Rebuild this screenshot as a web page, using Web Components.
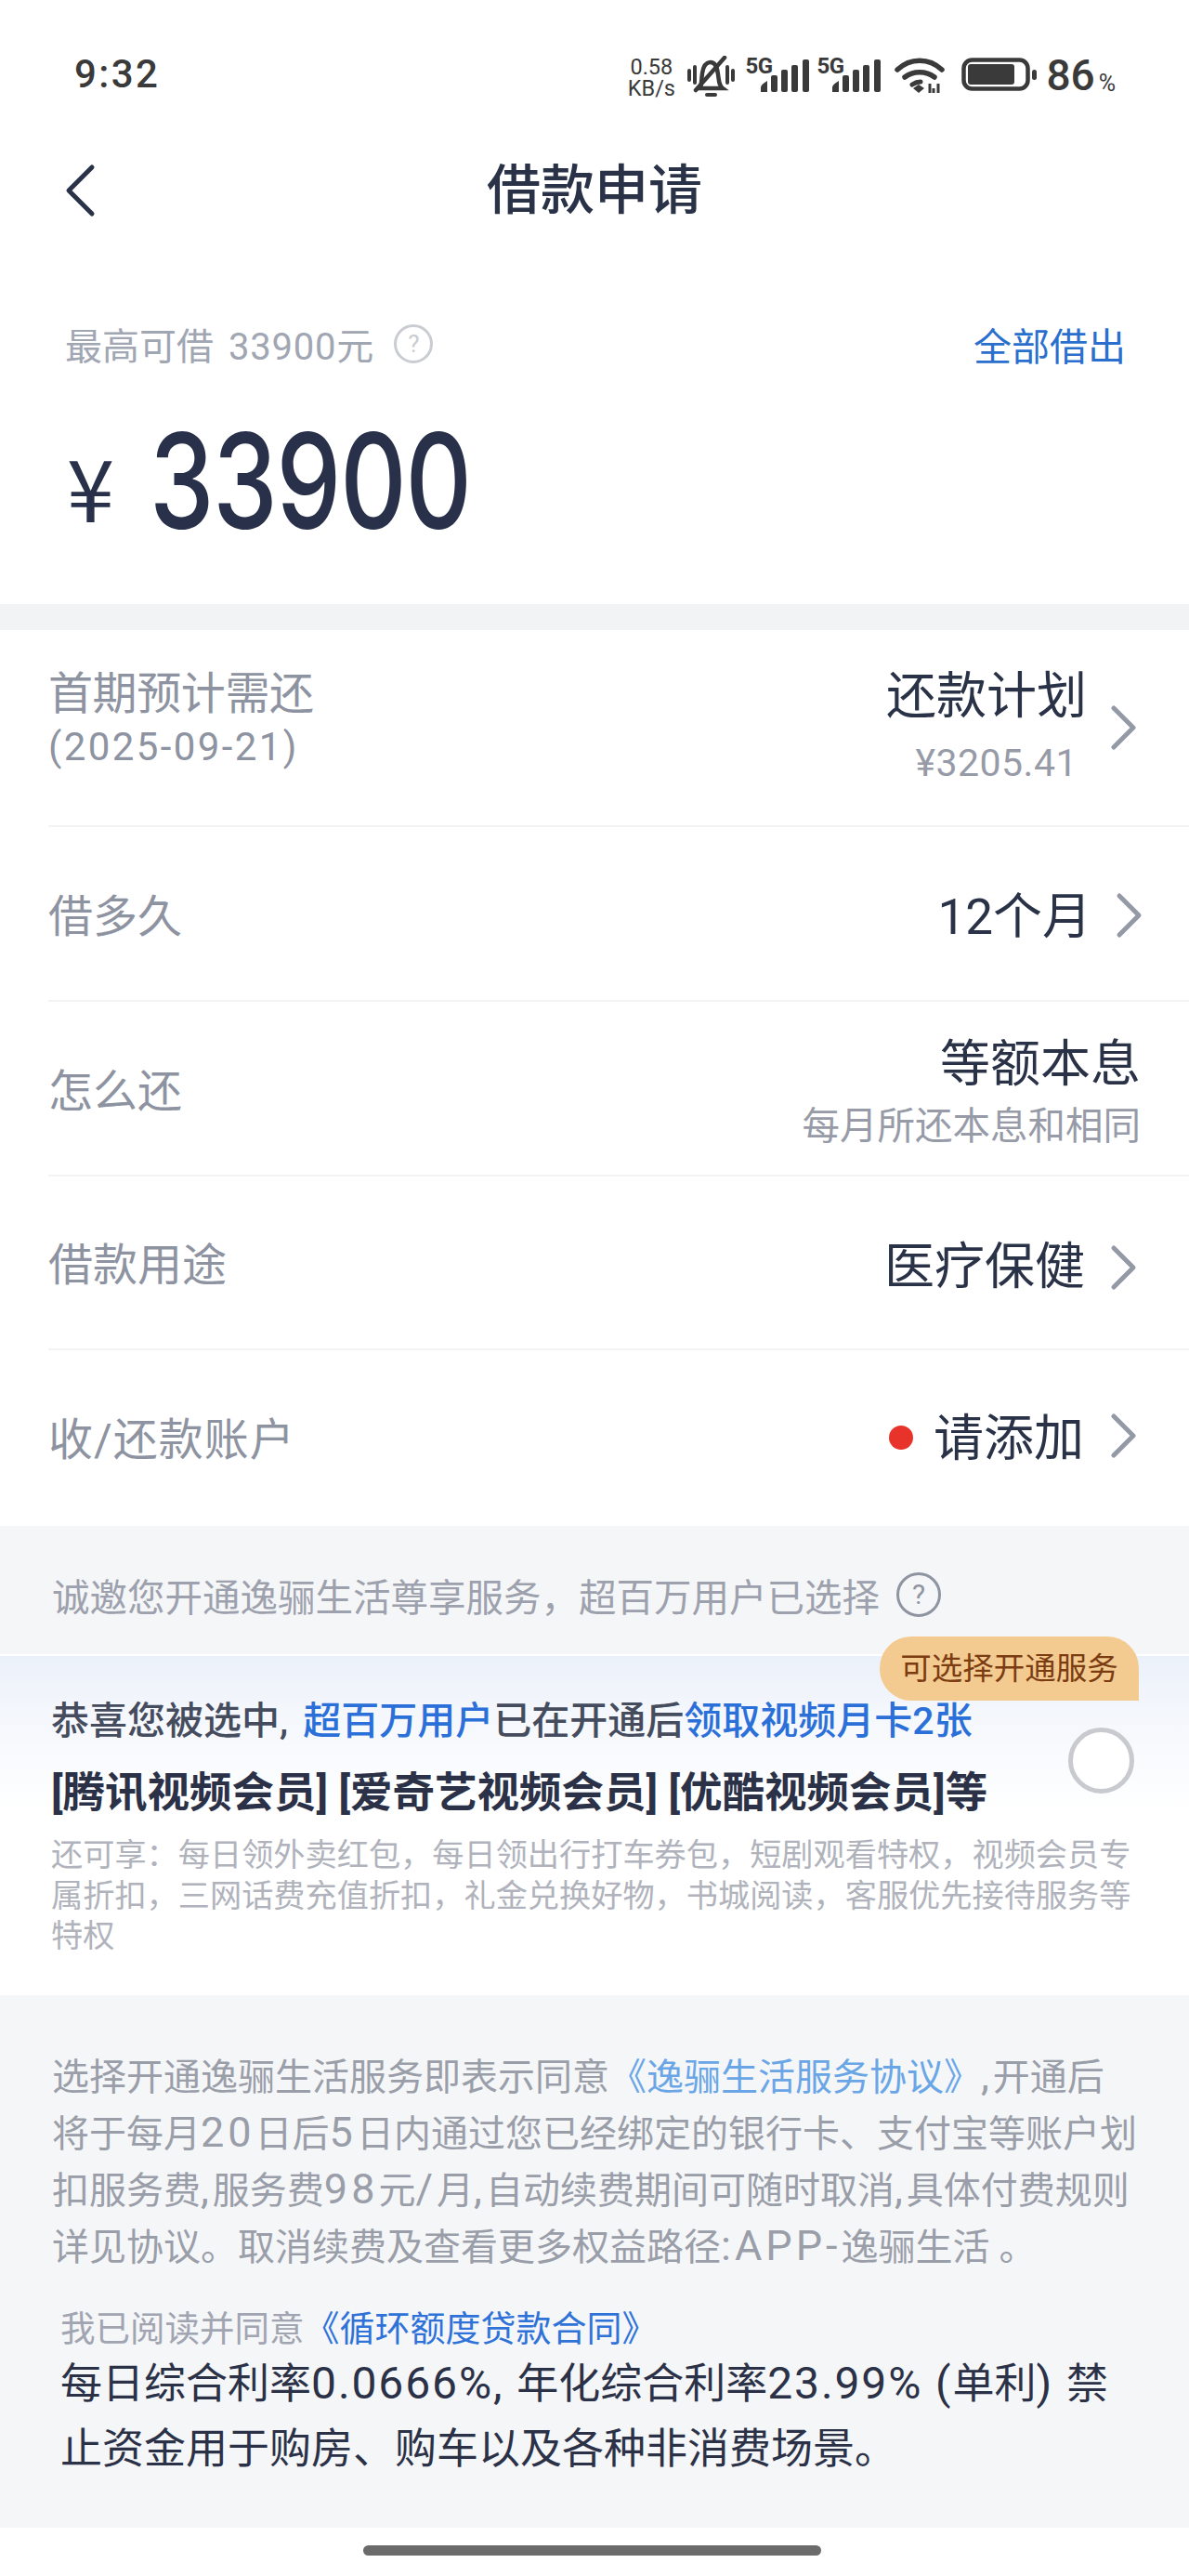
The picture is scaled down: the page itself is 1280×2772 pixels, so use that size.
<!DOCTYPE html>
<html lang="zh-CN">
<head>
<meta charset="utf-8">
<title>借款申请</title>
<style>
  html,body{margin:0;padding:0;background:#fff;}
  body{width:1280px;height:2772px;overflow:hidden;font-family:Roboto,"Noto Sans CJK SC",sans-serif;display:flex;flex-direction:column;}
</style>
</head>
<body>
<status-bar></status-bar>
<nav-header>借款申请</nav-header>
<amount-panel></amount-panel>
<loan-list>
  <loan-row style="--h:212px;--lm:0 0 16px;--nl:56px;--ns:2.4px;--lls:-.4px;--vm:12px 0 0;--sl:78px;--sls:.5px;--sr:10px;--cm:0 0 0 25px;--pr:56px" sep><span slot="label">首期预计需还</span><span slot="note">(2025-09-21)</span><span slot="value">还款计划</span><span slot="sub">¥3205.41</span></loan-row>
  <loan-row style="--h:188px;--lm:7px 0 0;--vm:7px 0 0;--cm:3px 0 0 26px;--pr:50px;--vf:53px" sep><span slot="label">借多久</span><span slot="value">12个月</span></loan-row>
  <loan-row style="--h:188px;--lm:7px 0 0;--vm:18px 0 0;--sl:68px;--pr:52px;--sf:40.5px" sep nochev><span slot="label">怎么还</span><span slot="value">等额本息</span><span slot="sub">每月所还本息和相同</span></loan-row>
  <loan-row style="--h:187px;--lm:7px 0 0;--vm:10px 0 0;--cm:10px 0 0 27px;--pr:56px" sep><span slot="label">借款用途</span><span slot="value">医疗保健</span></loan-row>
  <loan-row style="--h:189px;--lm:7px 0 0;--vm:4px 0 0;--cm:0 0 3px 28px;--pr:56px;--lls:1px" dot><span slot="label">收/还款账户</span><span slot="value">请添加</span></loan-row>
</loan-list>
<service-invite></service-invite>
<service-card></service-card>
<agreement-block></agreement-block>
<home-indicator></home-indicator>

<script>
const FONT = 'Roboto,"Noto Sans CJK SC",sans-serif';
function def(name, html, init){
  customElements.define(name, class extends HTMLElement{
    constructor(){
      super();
      const r=this.attachShadow({mode:'open'});
      r.innerHTML=html;
      if(init) init(this,r);
    }
  });
}
const bars=`<svg width="52" height="35" viewBox="0 0 52 35" fill="#3a3a3a"><path d="M0 35v-5q0-3 7-7v12z"/><rect x="11" y="17" width="7" height="18" rx="2"/><rect x="22" y="11" width="7" height="24" rx="2"/><rect x="33" y="6" width="7" height="29" rx="2"/><rect x="45" y="0" width="7" height="35" rx="2"/></svg>`;

def('status-bar',`<style>
:host{display:flex;box-sizing:border-box;height:160px;flex:none;padding:62px 79px 0 80px;align-items:flex-start;justify-content:space-between;font-family:${FONT};color:#3a3a3a}
.time{font-size:42px;line-height:42px;font-weight:500;letter-spacing:2.4px;margin-top:-3px}
.right{display:flex;align-items:flex-start}
.speed{width:54px;margin-right:11px;margin-top:-1px;display:flex;flex-direction:column;align-items:center}
.speed span{font-size:23.5px;line-height:22px;height:22px;white-space:nowrap}
.speed span+span{margin-top:1px}
.sig{position:relative;width:69px;height:42px;margin-right:8px;display:flex;justify-content:flex-end;align-items:flex-end}
.sig b{position:absolute;left:0;top:-2px;font-size:24px;line-height:22px;font-weight:700;letter-spacing:-.5px}
.sig svg{margin-bottom:5px}
.pct{font-size:46px;line-height:44px;margin-left:9px;margin-top:-3px;font-weight:500}
.pc2{font-size:25px;line-height:25px;margin-left:4px;margin-top:15px}
svg{display:block;flex:none}
</style>
<div class="time">9:32</div>
<div class="right">
<div class="speed"><span>0.58</span><span>KB/s</span></div>
<svg style="margin:-2px 10px 0 0" width="53" height="45" viewBox="0 0 53 45" fill="none" stroke="#3a3a3a"><path stroke-width="4" stroke-linecap="round" d="M3 16v10M9 12v17M44 12v17M50 16v10"/><path stroke-width="4.5" d="M15 35h24c-4-3-4-8-5-15-1-8-3-13-8-13s-8 5-9 12c-1 8-1 13-2 16z"/><path stroke-width="4.5" stroke-linecap="round" d="M41 2 10 37"/><path stroke-width="4" stroke-linecap="round" d="M22 42h9"/></svg>
<div class="sig"><b>5G</b>${bars}</div>
<div class="sig" style="margin-right:15px"><b>5G</b>${bars}</div>
<svg style="margin:0 18px 0 0" width="54" height="39" viewBox="0 0 54 39" fill="none" stroke="#3a3a3a" stroke-linecap="round"><path stroke-width="5.5" d="M3 13C17 0 37 0 51 13"/><path stroke-width="5.5" d="M11 21c9-7 23-7 32 0"/><path stroke-width="5" d="M19 29c3-2 6-3 9-3"/><path fill="#3a3a3a" stroke="none" d="M20 33l6-4 6 4-6 5z"/><path stroke-width="3" stroke-linecap="butt" d="M38 28v10M47 28v10M42 33v5"/></svg>
<svg width="82" height="36" viewBox="0 0 82 36" fill="none"><rect x="2.5" y="2.5" width="69" height="31" rx="9" stroke="#3a3a3a" stroke-width="4.5"/><rect x="7" y="7" width="50" height="22" rx="3" fill="#3a3a3a"/><rect x="76" y="13" width="5" height="11" rx="2.5" fill="#3a3a3a"/></svg>
<span class="pct">86</span><span class="pc2">%</span>
</div>`);

def('nav-header',`<style>
:host{display:flex;height:90px;flex:none;position:relative;align-items:center;justify-content:center;font-family:${FONT};color:#293247}
.t{font-size:58px;font-weight:500;line-height:90px}
svg{position:absolute;left:68px;top:16px}
</style>
<svg width="36" height="58" viewBox="0 0 36 58" fill="none" stroke="#293247" stroke-width="5" stroke-linecap="round" stroke-linejoin="round"><path d="M31 4 6 29l25 25"/></svg>
<div class="t"><slot></slot></div>`);

def('help-icon',`<style>
:host{display:inline-flex;align-items:center;justify-content:center;box-sizing:border-box;border-radius:50%;border:3px solid var(--c,#c9ccd1);color:var(--c,#c9ccd1);width:var(--s,42px);height:var(--s,42px);font-size:calc(var(--s,42px)*.62);line-height:1;font-family:${FONT};flex:none}
</style>?`);

def('amount-panel',`<style>
:host{display:block;box-sizing:border-box;height:400px;flex:none;padding:0 70px;font-family:${FONT}}
.top{display:flex;align-items:center;height:44px;margin-top:98px;color:#a1a6b3;font-size:40px;}
.top span.m{margin-right:22px;word-spacing:6px}
.top .d{letter-spacing:.8px}
.top .all{margin-left:auto;color:#2a6fce;margin-right:-2px;font-size:41px}
.amt{display:flex;align-items:flex-end;margin-top:65px;color:#283149;height:120px}
.y{font-size:92px;line-height:100px;font-family:"Noto Sans CJK SC",sans-serif;font-weight:400;margin-left:2px;margin-bottom:5px;}
.n{display:inline-block;font-family:Inter,sans-serif;font-weight:500;font-size:142px;line-height:120px;transform:scaleX(.78);transform-origin:0 50%;margin-left:38px;letter-spacing:-1.5px}
</style>
<div class="top"><span class="m">最高可借 <span class="d">33900</span>元</span><help-icon></help-icon><span class="all">全部借出</span></div>
<div class="amt"><span class="y">¥</span><span class="n">33900</span></div>`);

def('loan-list',`<style>:host{display:block;flex:none;margin-top:28px;background:#fff;box-shadow:0 -28px 0 #f2f3f4}</style><slot></slot>`);

def('loan-row',`<style>
:host{display:block;flex:none;box-sizing:border-box;font-family:${FONT}}
.w{box-sizing:border-box;height:var(--h,188px);margin-left:52px;padding-right:var(--pr,56px);display:flex;align-items:center;justify-content:space-between;border-bottom:2px solid transparent}
.left{margin:var(--lm,0)}
.l{color:#8e93a1;font-size:48px;line-height:58px;letter-spacing:var(--lls,0)}
.note{color:#8e93a1;font-size:42px;line-height:var(--nl,50px);display:block;letter-spacing:var(--ns,0)}
.r{display:flex;align-items:center}
.vals{text-align:right;margin:var(--vm,0)}
.v{color:#293247;font-size:var(--vf,54px);line-height:64px;display:block}
.s{color:#979ba8;font-size:var(--sf,41px);line-height:var(--sl,50px);display:block;letter-spacing:var(--sls,0);margin-right:var(--sr,0)}
.dot{width:26px;height:26px;border-radius:50%;background:#e8332a;margin-right:22px;display:none}
svg{display:block;margin:var(--cm,0 0 0 30px)}
</style>
<div class="w"><div class="left"><div class="l"><slot name="label"></slot></div><span class="note"><slot name="note"></slot></span></div>
<div class="r"><i class="dot"></i><div class="vals"><span class="v"><slot name="value"></slot></span><span class="s"><slot name="sub"></slot></span></div>
<svg class="ch" width="29" height="50" viewBox="0 0 29 50" fill="none" stroke="#9499a6" stroke-width="5" stroke-linecap="round" stroke-linejoin="round"><path d="M4 4l21 21L4 46"/></svg></div></div>`,
(el,r)=>{
  const w=r.querySelector('.w');
  queueMicrotask(()=>{
    if(el.hasAttribute('sep')) w.style.borderBottomColor='#f2f3f4';
    if(el.hasAttribute('dot')) r.querySelector('.dot').style.display='block';
    if(el.hasAttribute('nochev')){ r.querySelector('.ch').style.display='none'; }
    if(!el.querySelector('[slot=note]')) r.querySelector('.note').style.display='none';
    if(!el.querySelector('[slot=sub]')) r.querySelector('.s').style.display='none';
  });
});

def('service-invite',`<style>
:host{display:flex;flex:none;height:138px;box-sizing:border-box;background:#f5f6f8;padding:10px 0 0 56px;align-items:center;font-family:${FONT};color:#9da1ad;font-size:40.5px;--c:#8f94a1;--s:48px}
span{margin-right:18px}
</style><span>诚邀您开通逸骊生活尊享服务，超百万用户已选择</span><help-icon></help-icon>`);

def('service-card',`<style>
:host{display:block;flex:none;position:relative;box-sizing:border-box;height:367px;padding:46px 0 0 55px;font-family:${FONT};background:linear-gradient(#ebf1fa 0,#f4f7fc 60px,#fff 170px);border-top:2px solid #fff}
.tag{position:absolute;left:947px;top:-21px;width:279px;height:69px;box-sizing:border-box;background:#f3ca90;border-radius:34px 34px 0 34px;color:#7b3c12;font-size:33.5px;line-height:69px;text-align:center}
.l1{font-size:41px;line-height:48px;font-weight:500;color:#454c5e;white-space:nowrap}
.l1 em{font-style:normal;color:#2b6fd9}
.l1 em:first-of-type{margin-left:6px}
.l2{font-size:45.5px;line-height:48px;font-weight:700;color:#2b3147;margin-top:30px;white-space:nowrap}
.sm{font-size:34.2px;line-height:43.5px;color:#b0b3bc;margin-top:21px;white-space:nowrap}
.radio{position:absolute;left:1150px;top:77px;width:71px;height:71px;box-sizing:border-box;border-radius:50%;border:5px solid #c9cacf;background:#fff}
</style>
<div class="tag">可选择开通服务</div>
<div class="l1">恭喜您被选中,&nbsp;<em>超百万用户</em>已在开通后<em>领取视频月卡2张</em></div>
<div class="l2">[腾讯视频会员] [爱奇艺视频会员] [优酷视频会员]等</div>
<div class="sm">还可享：每日领外卖红包，每日领出行打车券包，短剧观看特权，视频会员专<br>属折扣，三网话费充值折扣，礼金兑换好物，书城阅读，客服优先接待服务等<br>特权</div>
<div class="radio"></div>`);

def('agreement-block',`<style>
:host{display:block;flex:none;box-sizing:border-box;height:573px;background:#f5f6f8;padding:58px 0 0 56px;font-family:${FONT}}
.p{font-size:40px;line-height:61px;color:#9a9ea9;white-space:nowrap}
.p a{color:#6aa6e6}
.p i{font-style:normal;font-size:45px;line-height:0;letter-spacing:4px}
.r{font-size:37.5px;line-height:46px;color:#a1a5b1;margin:34px 0 0 9px}
.r a{color:#2f72d8;font-size:38px}
.b{font-size:45px;line-height:70px;color:#2b3147;margin:2px 0 0 9px;white-space:nowrap}
.b i{font-style:normal;font-size:48px;line-height:0;letter-spacing:1.9px}
</style>
<div class="p">选择开通逸骊生活服务即表示同意<a>《逸骊生活服务协议》</a><i>,</i>开通后<br>将于每月<i>20</i>日后<i>5</i>日内通过您已经绑定的银行卡、支付宝等账户划<br>扣服务费<i>,</i>服务费<i>98</i>元<i>/</i>月<i>,</i>自动续费期间可随时取消<i>,</i>具体付费规则<br>详见协议。取消续费及查看更多权益路径<i>:APP-</i>逸骊生活 。</div>
<div class="r">我已阅读并同意<a>《循环额度贷款合同》</a></div>
<div class="b">每日综合利率<i>0.0666%, </i>年化综合利率<i>23.99% (</i>单利<i>) </i>禁<br>止资金用于购房、购车以及各种非消费场景。</div>`);

def('home-indicator',`<style>
:host{display:flex;flex:1;justify-content:center;align-items:center;background:#fff}
i{display:block;width:493px;height:11px;border-radius:6px;background:#6b6b6b;margin:-4px 6px 0 0}
</style><i></i>`);
</script>
</body>
</html>
